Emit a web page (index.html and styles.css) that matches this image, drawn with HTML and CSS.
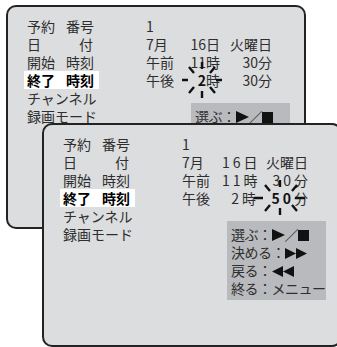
FILE: index.html
```html
<!DOCTYPE html>
<html lang="ja">
<head>
<meta charset="utf-8">
<title>予約</title>
<link rel="stylesheet" href="styles.css">
</head>
<body>
<div class="stage">
  <section class="panel panel--back">
    <div class="row">
      <div class="label"><span class="w1">予約</span><span class="w2">番号</span></div>
      <div class="va">1</div><div class="vb"></div><div class="vc"></div>
    </div>
    <div class="row">
      <div class="label"><span class="w1">日</span><span class="w2 end">付</span></div>
      <div class="va">7月</div><div class="vb"><span class="n">16</span>日</div><div class="vc">火曜日</div>
    </div>
    <div class="row">
      <div class="label"><span class="w1">開始</span><span class="w2">時刻</span></div>
      <div class="va">午前</div><div class="vb"><span class="n">11</span>時</div><div class="vc"><span class="n">30</span>分</div>
    </div>
    <div class="row">
      <div class="label hl"><span class="w1">終了</span><span class="w2">時刻</span></div>
      <div class="va">午後</div>
      <div class="vb"><span class="n blink">2<svg class="spark" width="42" height="40" viewBox="0 0 42 40"><path d="M21 2V9M21 31V38M1 20H7M35 20H41M8 7L13 13M34 7L29 13M8 33L13 27M34 33L29 27"/></svg></span>時</div>
      <div class="vc"><span class="n">30</span>分</div>
    </div>
    <div class="lower">
      <div class="labels">
        <div>チャンネル</div>
        <div>録画モード</div>
      </div>
      <div class="hint">
        <div>選ぶ：<svg class="ic" width="13" height="12" viewBox="0 0 13 12"><path d="M0 0L13 6L0 12Z"/></svg>／<svg class="ic" width="11" height="11" viewBox="0 0 11 11"><rect width="11" height="11"/></svg></div>
      </div>
    </div>
  </section>

  <section class="panel panel--front">
    <div class="row">
      <div class="label"><span class="w1">予約</span><span class="w2">番号</span></div>
      <div class="va">1</div><div class="vb"></div><div class="vc"></div>
    </div>
    <div class="row">
      <div class="label"><span class="w1">日</span><span class="w2 end">付</span></div>
      <div class="va">7月</div><div class="vb"><span class="n">16</span>日</div><div class="vc">火曜日</div>
    </div>
    <div class="row">
      <div class="label"><span class="w1">開始</span><span class="w2">時刻</span></div>
      <div class="va">午前</div><div class="vb"><span class="n">11</span>時</div><div class="vc"><span class="n">30</span>分</div>
    </div>
    <div class="row">
      <div class="label hl"><span class="w1">終了</span><span class="w2">時刻</span></div>
      <div class="va">午後</div>
      <div class="vb"><span class="n">2</span>時</div>
      <div class="vc"><span class="n blink">50<svg class="spark spark--wide" width="56" height="40" viewBox="0 0 56 40"><path d="M28 2V9M28 30V37M2 20H11M43 20H53M13 7L18 13M45 7L40 13M13 33L18 27M45 33L40 27"/></svg></span>分</div>
    </div>
    <div class="lower">
      <div class="labels">
        <div>チャンネル</div>
        <div>録画モード</div>
      </div>
      <div class="hint">
        <div>選ぶ：<svg class="ic" width="13" height="12" viewBox="0 0 13 12"><path d="M0 0L13 6L0 12Z"/></svg>／<svg class="ic" width="11" height="11" viewBox="0 0 11 11"><rect width="11" height="11"/></svg></div>
        <div>決める：<svg class="ic" width="22" height="11" viewBox="0 0 22 11"><path d="M0 0L11 5.5L0 11ZM11 0L22 5.5L11 11Z"/></svg></div>
        <div>戻る：<svg class="ic" width="22" height="11" viewBox="0 0 22 11"><path d="M11 0L0 5.5L11 11ZM22 0L11 5.5L22 11Z"/></svg></div>
        <div>終る：メニュー</div>
      </div>
    </div>
  </section>
</div>
</body>
</html>
```

FILE: styles.css
```css
html, body {
  margin: 0;
  padding: 0;
  background: #ffffff;
  overflow: hidden;
}

.stage {
  display: grid;
  font-family: "Noto Sans CJK JP", "Noto Sans", sans-serif;
  font-size: 14px;
  line-height: 18px;
  color: #2e2e2e;
}

.panel {
  grid-area: 1 / 1;
  box-sizing: border-box;
  width: 300px;
  height: 224px;
  border: 2px solid #232323;
  border-radius: 10px;
  background: #dcdddf;
  padding: 10px 0 0 19px;
}

.panel--back {
  margin: 5px 0 0 6px;
}

.panel--front {
  margin: 123px 0 0 42px;
}

.row {
  display: grid;
  grid-template-columns: 119px 40px 34px 52px;
  height: 18px;
}

.label {
  display: flex;
  white-space: nowrap;
}

.w1 {
  width: 39px;
}

.w2.end {
  width: 27px;
  text-align: right;
}

.label.hl {
  box-sizing: border-box;
  width: 75px;
  margin-left: -3px;
  padding-left: 3px;
  background: #ffffff;
  color: #000000;
  font-weight: 700;
}

.va {
  white-space: nowrap;
}

.vb, .vc {
  text-align: right;
  white-space: nowrap;
}

.panel--front .n {
  letter-spacing: 3px;
}

.blink {
  position: relative;
  font-weight: 700;
  color: #111;
}

.spark {
  position: absolute;
  left: 50%;
  top: 50%;
  transform: translate(-50%, -50%);
  fill: none;
  stroke: #111;
  stroke-width: 2.4;
}

.spark--wide {
  margin-left: -3px;
}

.lower {
  display: flex;
  align-items: flex-start;
}

.labels {
  width: 164px;
  flex: none;
}

.hint {
  flex: none;
  box-sizing: border-box;
  width: 99px;
  margin-top: 14px;
  padding: 4px 0 3px 4px;
  background: #b9babd;
  letter-spacing: -0.5px;
  white-space: nowrap;
}

.ic {
  fill: #111;
  vertical-align: -1px;
}
```
